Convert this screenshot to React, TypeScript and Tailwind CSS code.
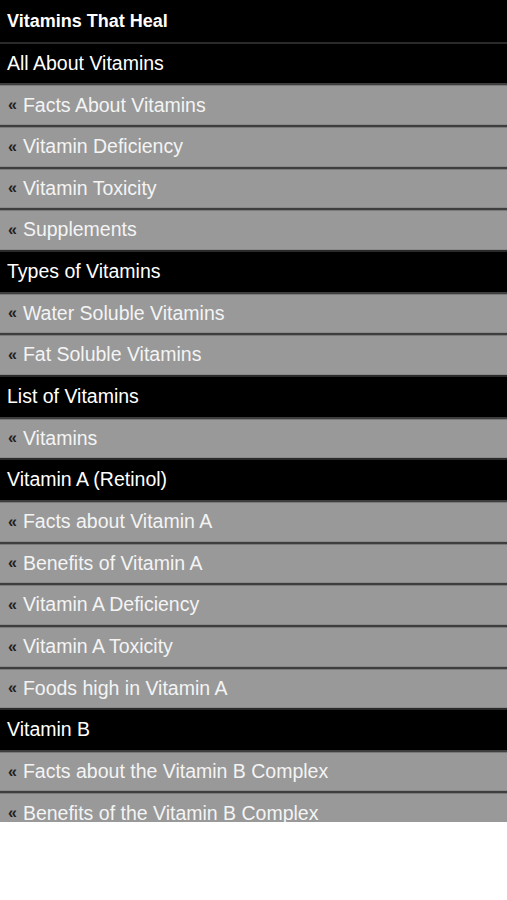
import React from "react";

type Row = { t: string; h?: boolean };

const rows: Row[] = [
  { t: "All About Vitamins", h: true },
  { t: "Facts About Vitamins" },
  { t: "Vitamin Deficiency" },
  { t: "Vitamin Toxicity" },
  { t: "Supplements" },
  { t: "Types of Vitamins", h: true },
  { t: "Water Soluble Vitamins" },
  { t: "Fat Soluble Vitamins" },
  { t: "List of Vitamins", h: true },
  { t: "Vitamins" },
  { t: "Vitamin A (Retinol)", h: true },
  { t: "Facts about Vitamin A" },
  { t: "Benefits of Vitamin A" },
  { t: "Vitamin A Deficiency" },
  { t: "Vitamin A Toxicity" },
  { t: "Foods high in Vitamin A" },
  { t: "Vitamin B", h: true },
  { t: "Facts about the Vitamin B Complex" },
  { t: "Benefits of the Vitamin B Complex" },
];

export default function App() {
  return (
    <div className="w-[507px] h-[900px] bg-white" style={{ fontFamily: '"Liberation Sans", Arial, sans-serif' }}>
      <div className="h-[822px] overflow-hidden flex flex-col">
        <div className="h-[41.67px] shrink-0 bg-black flex items-center px-[7px] pt-[1px] text-white font-bold text-[18px]">
          Vitamins That Heal
        </div>
        {rows.map((r, i) =>
          r.h ? (
            <div
              key={i}
              className="h-[41.67px] shrink-0 bg-black border-t-[2px] border-[#2a2a2a] flex items-center px-[7px] text-white text-[19.5px]"
            >
              {r.t}
            </div>
          ) : (
            <div
              key={i}
              className="h-[41.67px] shrink-0 bg-[#999999] border-t-[2px] border-[#3e3e3e] shadow-[inset_0_1px_0_#7a7a7a,inset_0_-1px_0_#8a8a8a] flex items-center pl-[8px] pr-[7px] text-[#f4f4f4] text-[19.5px]"
            >
              <span className="text-[#1e1e1e] text-[16px] mr-[6px] font-bold">«</span>
              {r.t}
            </div>
          )
        )}
      </div>
    </div>
  );
}
